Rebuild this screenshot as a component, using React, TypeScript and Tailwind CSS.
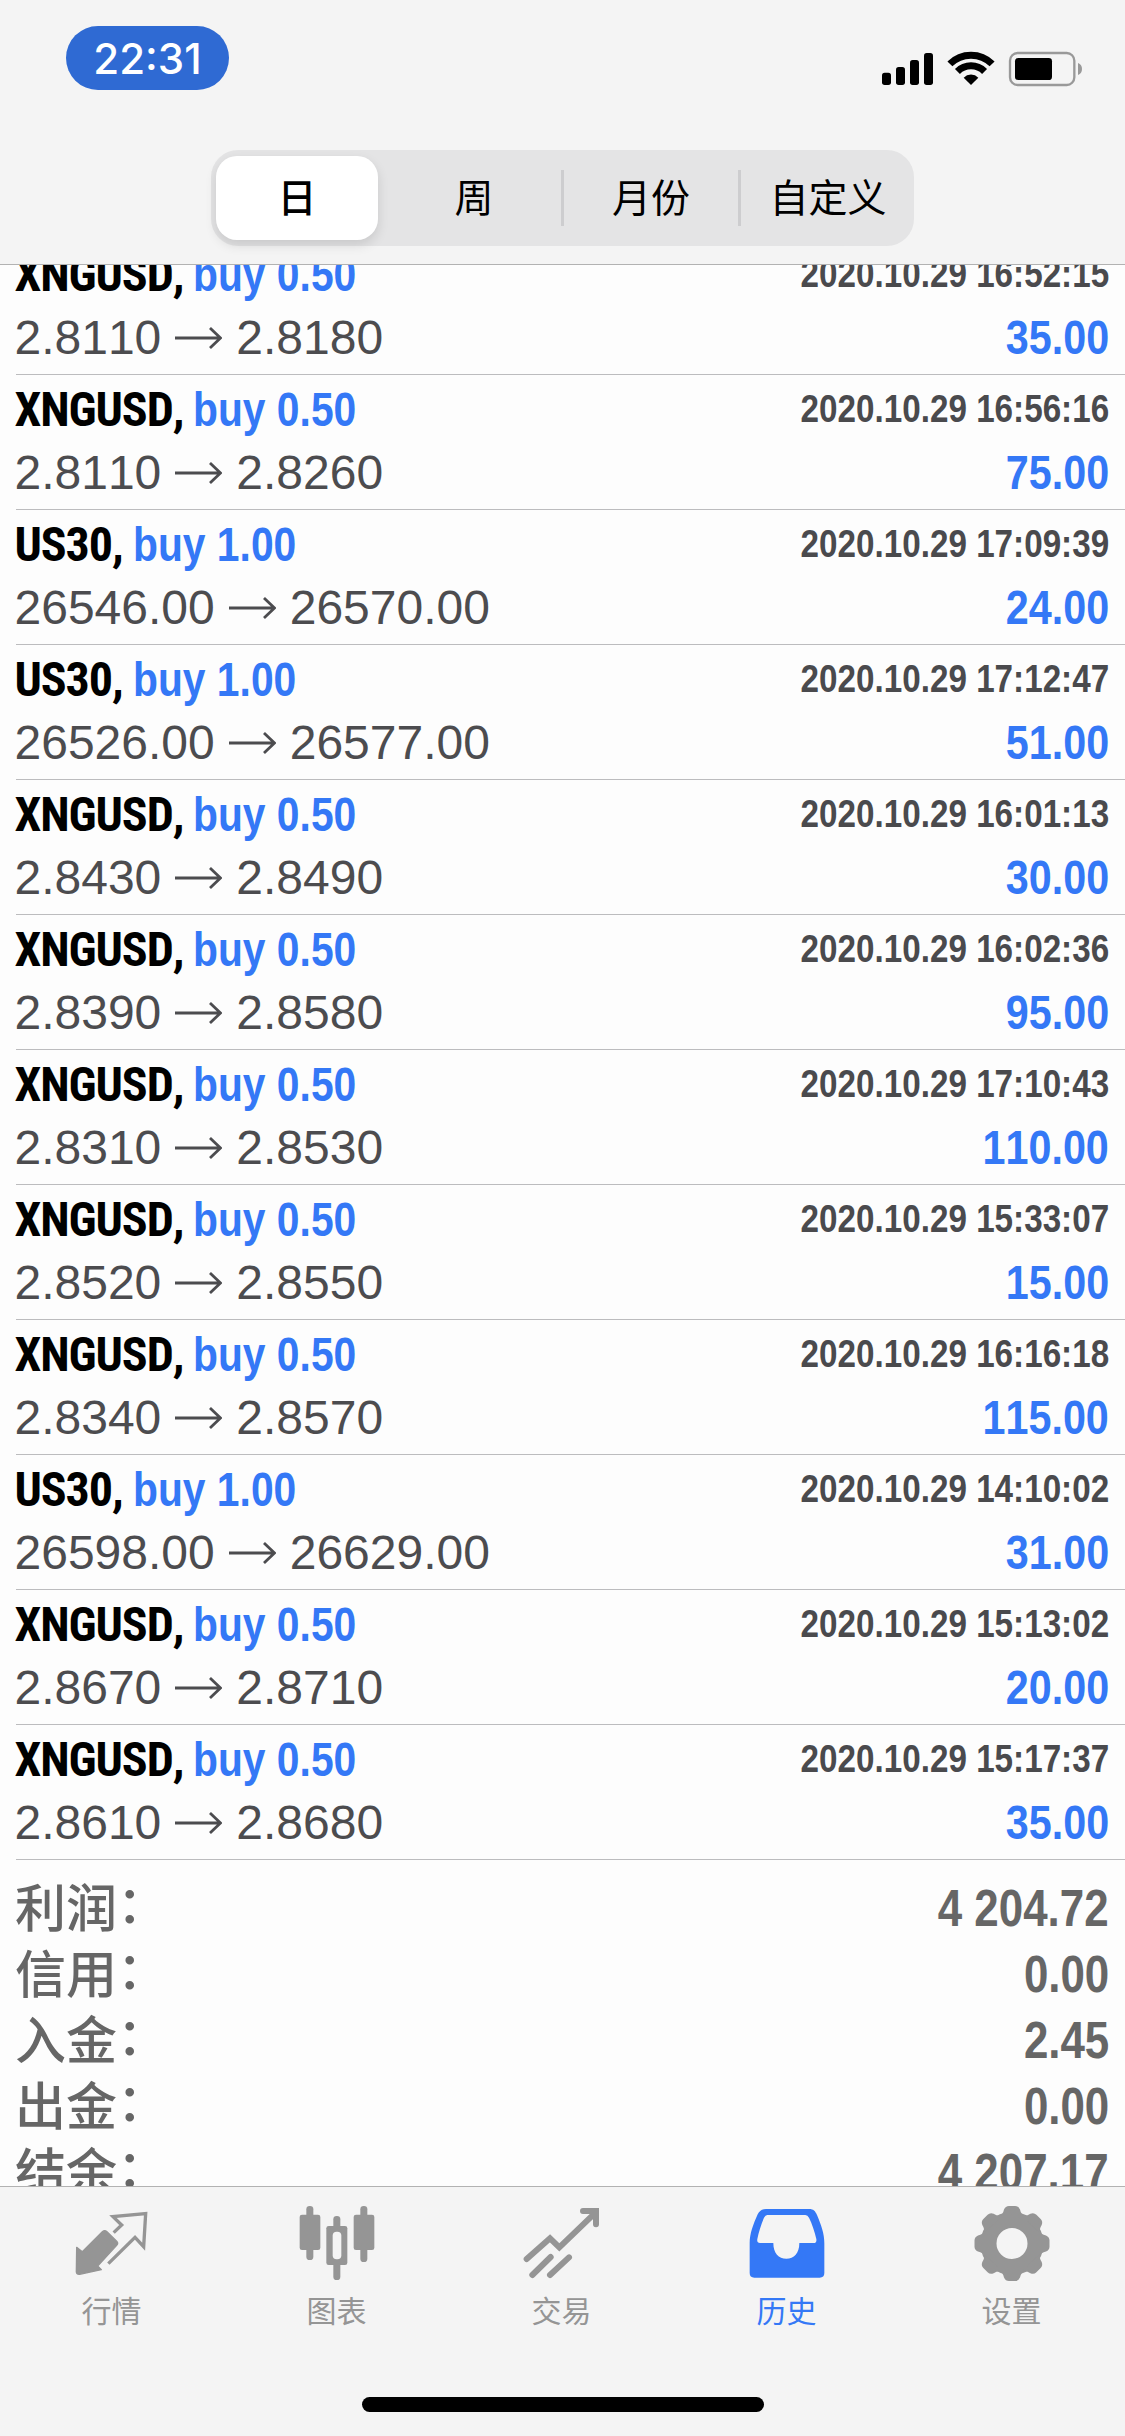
import type { ReactNode } from 'react'
import clsx from 'clsx'

interface Deal {
  symbol: string
  volume: string
  open: string
  close: string
  time: string
  profit: string
}

const deals: Deal[] = [
  { symbol: 'XNGUSD', volume: '0.50', open: '2.8110', close: '2.8180', time: '2020.10.29 16:52:15', profit: '35.00' },
  { symbol: 'XNGUSD', volume: '0.50', open: '2.8110', close: '2.8260', time: '2020.10.29 16:56:16', profit: '75.00' },
  { symbol: 'US30', volume: '1.00', open: '26546.00', close: '26570.00', time: '2020.10.29 17:09:39', profit: '24.00' },
  { symbol: 'US30', volume: '1.00', open: '26526.00', close: '26577.00', time: '2020.10.29 17:12:47', profit: '51.00' },
  { symbol: 'XNGUSD', volume: '0.50', open: '2.8430', close: '2.8490', time: '2020.10.29 16:01:13', profit: '30.00' },
  { symbol: 'XNGUSD', volume: '0.50', open: '2.8390', close: '2.8580', time: '2020.10.29 16:02:36', profit: '95.00' },
  { symbol: 'XNGUSD', volume: '0.50', open: '2.8310', close: '2.8530', time: '2020.10.29 17:10:43', profit: '110.00' },
  { symbol: 'XNGUSD', volume: '0.50', open: '2.8520', close: '2.8550', time: '2020.10.29 15:33:07', profit: '15.00' },
  { symbol: 'XNGUSD', volume: '0.50', open: '2.8340', close: '2.8570', time: '2020.10.29 16:16:18', profit: '115.00' },
  { symbol: 'US30', volume: '1.00', open: '26598.00', close: '26629.00', time: '2020.10.29 14:10:02', profit: '31.00' },
  { symbol: 'XNGUSD', volume: '0.50', open: '2.8670', close: '2.8710', time: '2020.10.29 15:13:02', profit: '20.00' },
  { symbol: 'XNGUSD', volume: '0.50', open: '2.8610', close: '2.8680', time: '2020.10.29 15:17:37', profit: '35.00' },
]

const summary = [
  { label: '利润', value: '4 204.72' },
  { label: '信用', value: '0.00' },
  { label: '入金', value: '2.45' },
  { label: '出金', value: '0.00' },
  { label: '结余', value: '4 207.17' },
]

const periods = ['日', '周', '月份', '自定义']

function StatusIcons() {
  return (
    <svg className="w-[225px] h-[60px]" viewBox="0 0 675 180" fill="#000">
      <rect x="36" y="98" width="27" height="37" rx="8" />
      <rect x="78" y="81" width="27" height="54" rx="8" />
      <rect x="120" y="60" width="27" height="75" rx="8" />
      <rect x="162" y="39" width="27" height="96" rx="8" />
      <g fill="none" stroke="#000" strokeWidth="21">
        <path d="M239.7 71.7A89.5 89.5 0 0 1 366.3 71.7" />
        <path d="M262.3 94.3A57.5 57.5 0 0 1 343.7 94.3" />
      </g>
      <path d="M303 135L281 113A31 31 0 0 1 325 113Z" />
      <rect x="420" y="39" width="193" height="96" rx="23" fill="none" stroke="#999" strokeWidth="7" />
      <rect x="435" y="54" width="111" height="66" rx="10" />
      <path d="M624 69Q636 74 636 87T624 105Z" fill="#999" />
    </svg>
  )
}

function QuotesIcon() {
  return (
    <svg className="w-20 h-20" viewBox="218 69 240 240">
      <path
        d="M229 202L246 215L306 155Q313 149 320 155L349 184Q355 190 349 196L292 258L303 269L238 283Q228 284 228 275Z"
        fill="currentColor"
        stroke="currentColor"
        strokeWidth="4"
        strokeLinejoin="round"
      />
      <path
        d="M340 158L364 135L338 110L436 101L430 200L404 172L324 251"
        fill="none"
        stroke="currentColor"
        strokeWidth="10"
      />
    </svg>
  )
}

function ChartIcon() {
  return (
    <svg className="w-20 h-20" viewBox="893 69 240 240" fill="currentColor">
      <rect x="898" y="104" width="62" height="106" rx="7" />
      <rect x="918" y="78" width="21" height="162" rx="10" />
      <rect x="1060" y="104" width="62" height="106" rx="7" />
      <rect x="1080" y="78" width="21" height="168" rx="10" />
      <rect x="978" y="138" width="63" height="117" rx="7" />
      <rect x="999" y="108" width="21" height="192" rx="10" />
      <rect x="997" y="155" width="26" height="83" rx="12" fill="#f4f4f4" />
    </svg>
  )
}

function TradeIcon() {
  return (
    <svg className="w-20 h-20" viewBox="33 24 240 240" fill="none" stroke="currentColor" strokeWidth="18" strokeLinecap="round">
      <path d="M44 192L114 130L142 157L248 55" />
      <path d="M213 48H252V88" />
      <path d="M61 240L116 186M114 240L171 187" />
    </svg>
  )
}

function HistoryIcon() {
  return (
    <svg className="w-20 h-20" viewBox="38 24 240 240" fill="currentColor">
      <path
        fillRule="evenodd"
        d="M92 42H222C234 42 240 48 245 60C258 92 267 115 267 145V234Q267 248 253 248H57Q43 248 43 234V145C43 115 54 88 67 58Q74 42 92 42Z
           M96 60Q90 60 86 68C76 92 70 112 66 132Q64 144 74 144H114C114 175 130 191 153 191C176 191 192 175 192 144H234Q245 144 243 132C238 110 230 86 221 68Q217 60 210 60Z"
      />
    </svg>
  )
}

const teeth = [0, 45, 90, 135, 180, 225, 270, 315]

function SettingsIcon() {
  return (
    <svg className="w-20 h-20" viewBox="-39 -40.5 80 80" fill="currentColor">
      <circle r="23.500" fill="none" stroke="currentColor" strokeWidth="16" />
      {teeth.map((angle) => (
        <path
          key={angle}
          d="M-13 -27Q-9 -29 -8 -34Q-6.500 -37.500 -3 -37.500H3Q6.500 -37.500 8 -34Q9 -29 13 -27Z"
          transform={`rotate(${angle})`}
        />
      ))}
    </svg>
  )
}

function Arrow() {
  return (
    <svg className="w-[47px] h-6 mx-3.5" viewBox="0 0 47 24" fill="none" stroke="currentColor" strokeWidth="2.8">
      <path d="M0 12H45M35 2L45.500 12L35 22" />
    </svg>
  )
}

function DealRow({ deal }: { deal: Deal }) {
  return (
    <div className="h-[135px] shrink-0 ml-4 pt-[3px] pr-4 border-b border-[#bcbcbe]">
      <div className="-ml-[1.5px] h-[65px] flex justify-between items-start font-bold whitespace-nowrap">
        <div className="flex items-baseline text-[48px] leading-[64px]">
          <span className="font-['Roboto',sans-serif] [font-stretch:75%] tracking-[-1.1px] text-black">{deal.symbol},</span>
          <span className="ml-2.5 origin-left scale-x-[0.85] text-[#3478f6]">buy {deal.volume}</span>
        </div>
        <span className="origin-right scale-x-[0.852] text-[39px] leading-[61px] text-[#4a4a4d]">{deal.time}</span>
      </div>
      <div className="-ml-[1.5px] h-[60px] flex justify-between items-start text-[48px] leading-[60px] whitespace-nowrap">
        <div className="flex items-center text-[#4c4c4f]">
          <span>{deal.open}</span>
          <Arrow />
          <span>{deal.close}</span>
        </div>
        <span className="origin-right scale-x-[0.86] font-bold text-[#3478f6]">{deal.profit}</span>
      </div>
    </div>
  )
}

function Tab({ label, active, children }: { label: string; active?: boolean; children: ReactNode }) {
  return (
    <div className={clsx('flex-1 flex flex-col items-center', active ? 'text-[#3478f6]' : 'text-[#959595]')}>
      {children}
      <span className="mt-1.5 mr-0.5 font-['Noto_Sans_CJK_SC',sans-serif] text-[30px] leading-[40px]">{label}</span>
    </div>
  )
}

export default function App() {
  return (
    <div className="w-[1125px] h-[2436px] flex flex-col overflow-hidden bg-[#fdfdfd] font-['Liberation_Sans','Noto_Sans_CJK_SC',sans-serif] [font-kerning:none]">
      {/* Status bar + period switch */}
      <header className="h-[265px] shrink-0 bg-[#f4f4f4] border-b border-[#b2b2b2]">
        <div className="h-[150px] flex justify-between items-start pl-[66px] pr-[30px]">
          <div className="mt-[26px] w-[163px] h-16 pt-0.5 rounded-[32px] bg-[#2f6ad3] flex items-center justify-center">
            <span className="font-['Inter',sans-serif] font-medium text-[42px] leading-none text-white">22:31</span>
          </div>
          <div className="mt-10">
            <StatusIcons />
          </div>
        </div>
        <div className="mx-auto w-[703px] h-24 rounded-[27px] bg-[#e4e4e5] flex items-center px-[5px] py-1.5 font-['Noto_Sans_CJK_SC',sans-serif] text-[39px] leading-[56px] text-black">
          {periods.map((period, i) => (
            <div key={period} className="flex items-center">
              {i > 0 && (
                <div className="w-[15px] flex justify-center">
                  <div className={clsx('w-[3px] h-14', i > 1 && 'bg-[#cdcdcf]')} />
                </div>
              )}
              <div
                className={clsx(
                  'w-[162px] h-[84px] pb-1.5 flex items-center justify-center rounded-[21px] whitespace-nowrap',
                  i === 0 && 'bg-white font-medium shadow-[0_5px_12px_rgba(0,0,0,0.12)]',
                )}
              >
                {period}
              </div>
            </div>
          ))}
        </div>
      </header>

      {/* Deals, scrolled so that the first row is cut by the header */}
      <main className="flex-1 min-h-0 overflow-hidden">
        <div className="-mt-[25px] flex flex-col">
          {deals.map((deal) => (
            <DealRow key={deal.time} deal={deal} />
          ))}
          <div className="pt-4 pl-[15px] pr-4 text-[51px] text-[#666]">
            {summary.map((item) => (
              <div key={item.label} className="h-[66px] flex justify-between items-start whitespace-nowrap">
                <span className="font-['Noto_Sans_CJK_SC',sans-serif] font-medium leading-[59px]">
                  {item.label}
                  <span className="relative -top-1">：</span>
                </span>
                <span className="origin-right scale-x-[0.86] font-bold leading-[66px]">{item.value}</span>
              </div>
            ))}
          </div>
        </div>
      </main>

      {/* Tab bar */}
      <footer className="h-[250px] shrink-0 relative z-10 bg-[#f4f4f4] border-t border-[#b2b2b2] flex flex-col items-center">
        <nav className="w-full h-[210px] pt-4 flex">
          <Tab label="行情">
            <QuotesIcon />
          </Tab>
          <Tab label="图表">
            <ChartIcon />
          </Tab>
          <Tab label="交易">
            <TradeIcon />
          </Tab>
          <Tab label="历史" active>
            <HistoryIcon />
          </Tab>
          <Tab label="设置">
            <SettingsIcon />
          </Tab>
        </nav>
        <div className="w-[402px] h-[15px] rounded-full bg-black" />
      </footer>
    </div>
  )
}
